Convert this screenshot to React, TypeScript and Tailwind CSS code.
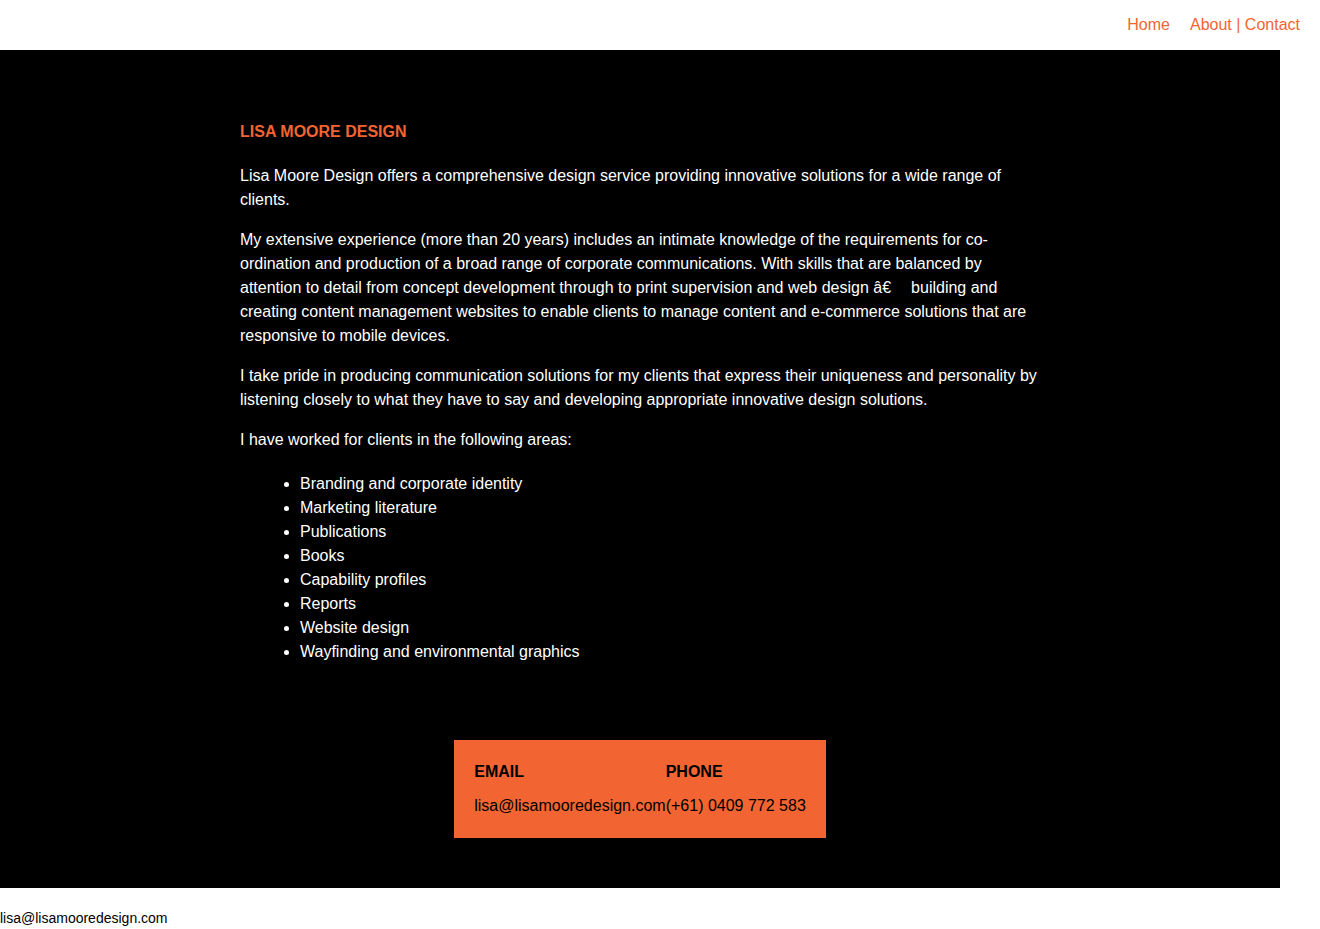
const areas = [
  "Branding and corporate identity",
  "Marketing literature",
  "Publications",
  "Books",
  "Capability profiles",
  "Reports",
  "Website design",
  "Wayfinding and environmental graphics",
];

function Header() {
  return (
    <header className="h-[50px] flex items-center justify-end pr-[20px] bg-white">
      <nav className="flex gap-[20px] text-[16px] text-[#f26532]">
        <a href="#">Home</a>
        <span>
          <a href="#">About</a> | <a href="#">Contact</a>
        </span>
      </nav>
    </header>
  );
}

function ContactBox() {
  return (
    <div className="mx-auto w-fit bg-[#f26532] p-[20px] text-black text-[16px] leading-6">
      <div className="grid grid-cols-[auto_auto]">
        <div>
          <h3 className="font-bold mb-[10px]">EMAIL</h3>
          <p>lisa@lisamooredesign.com</p>
        </div>
        <div>
          <h3 className="font-bold mb-[10px]">PHONE</h3>
          <p>(+61) 0409 772 583</p>
        </div>
      </div>
    </div>
  );
}

export default function App() {
  return (
    <div className="min-h-[929px] bg-white font-['Liberation_Sans',Arial,sans-serif]">
      <Header />

      <main className="w-[1280px] bg-black text-white pt-[70px] pb-[50px]">
        <div className="px-[240px] text-[16px] leading-6">
          <h1 className="font-bold text-[#f26532] mb-[20px]">LISA MOORE DESIGN</h1>
          <p className="mb-[16px]">
            Lisa Moore Design offers a comprehensive design service providing innovative solutions for a wide range of
            clients.
          </p>
          <p className="mb-[16px]">
            My extensive experience (more than 20 years) includes an intimate knowledge of the requirements for
            co-ordination and production of a broad range of corporate communications. With skills that are balanced by
            attention to detail from concept development through to print supervision and web design â€
            <span className="inline-block w-[20px]" />
            building and creating content management websites to enable clients to manage content and e-commerce
            solutions that are responsive to mobile devices.
          </p>
          <p className="mb-[16px]">
            I take pride in producing communication solutions for my clients that express their uniqueness and
            personality by listening closely to what they have to say and developing appropriate innovative design
            solutions.
          </p>
          <p className="mb-[20px]">I have worked for clients in the following areas:</p>
          <ul className="list-disc pl-[60px]">
            {areas.map((a) => (
              <li key={a}>{a}</li>
            ))}
          </ul>
        </div>

        <div className="mt-[76px]">
          <ContactBox />
        </div>
      </main>

      <footer className="pt-[22px] text-[14px] leading-4 text-black">lisa@lisamooredesign.com</footer>
    </div>
  );
}
